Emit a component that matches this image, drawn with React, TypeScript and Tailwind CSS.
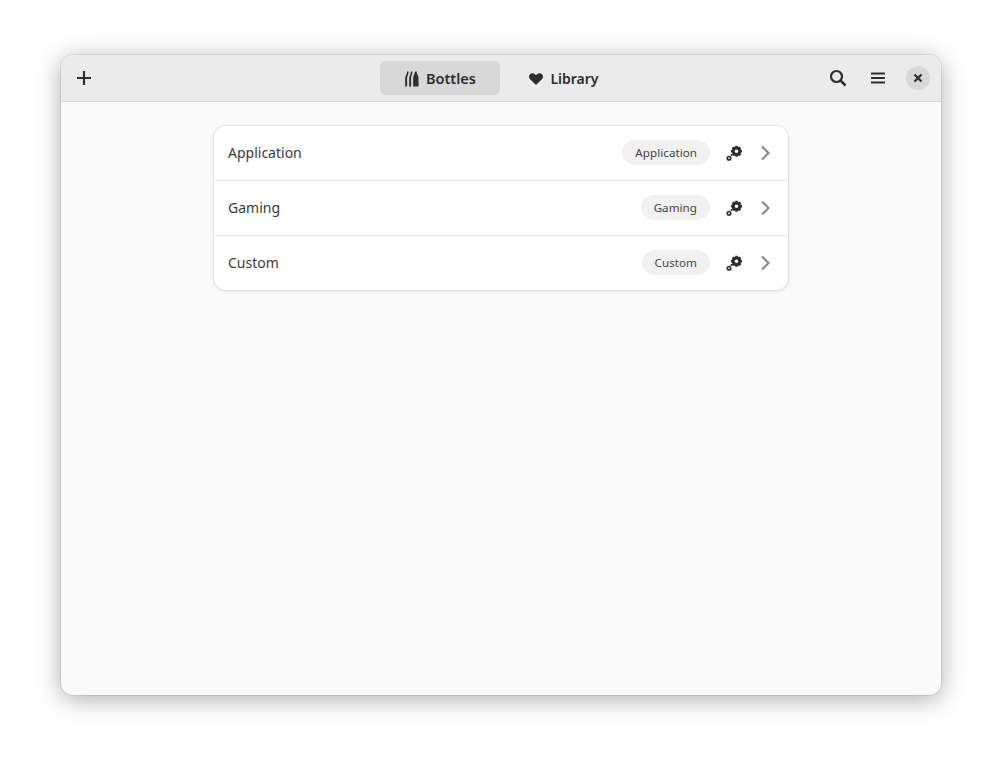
const rows = ["Application", "Gaming", "Custom"];

function BottlesIcon() {
  return (
    <svg width="16" height="16" viewBox="0 0 16 16" fill="#2e2e2e">
      <path d="M1.200 15.500V7.200C1.200 5 2.800 3.600 3.200.5h1.500C4.400 3.800 3.100 5.200 3.100 7.400v8.100z" />
      <path d="M5.200 15.500V7.200C5.200 5 6.600 3.600 7 .5h1.500C8.200 3.800 7.100 5.200 7.100 7.400v8.100z" />
      <path d="M9.200 15.500V6.600c0-1.800 1.500-2.800 1.800-6.100h1.600c.3 3.300 1.900 4.300 1.900 6.100v8.900z" />
    </svg>
  );
}

function GearsIcon() {
  return (
    <svg width="17" height="16" viewBox="0 0 17 16" fill="none" stroke="#2e2e2e">
      <circle cx="10.500" cy="6.300" r="3.300" strokeWidth="3" />
      <path
        d="M10.500.8v2.300M10.500 9.500v2.300M5 6.300h2.300M13.700 6.300H16M6.600 2.400l1.700 1.700M12.700 8.500l1.700 1.700M14.400 2.400l-1.700 1.700M8.300 8.500l-1.700 1.700"
        strokeWidth="2.400"
      />
      <circle cx="3" cy="13.200" r="1.700" strokeWidth="1.700" />
      <circle cx="5.600" cy="10" r="1.100" fill="#2e2e2e" stroke="none" />
    </svg>
  );
}

function Row({ name, last }: { name: string; last: boolean }) {
  return (
    <div
      className={`flex items-center pb-px pl-[14px] pr-[15px] ${
        last ? "h-[54px]" : "h-[55px] border-b border-[#e8e8e8]"
      }`}
    >
      <span className="flex-1 text-[14px] text-[#3a3a3a]">{name}</span>
      <span className="flex h-[25px] items-center rounded-full bg-[#f1f1f1] px-[13px] text-[11.600px] tracking-[0.05px] text-[#444444]">
        {name}
      </span>
      <span className="ml-[16px] flex w-[17px] justify-center">
        <GearsIcon />
      </span>
      <svg className="ml-[14px]" width="16" height="16" viewBox="0 0 16 16" fill="none">
        <path d="M5 1.500 11.500 8 5 14.500" stroke="#8a8a8a" strokeWidth="2.200" />
      </svg>
    </div>
  );
}

export default function App() {
  return (
    <div
      className="h-[762px] w-[1002px] overflow-hidden bg-white pl-[61px] pt-[55px]"
      style={{ fontFamily: '"Noto Sans", sans-serif' }}
    >
      <div className="flex h-[640px] w-[880px] flex-col overflow-hidden rounded-[12px] bg-[#fafafa] shadow-[0_4px_24px_rgba(0,0,0,0.33),0_0_0_1px_rgba(0,0,0,0.07)]">
        {/* Header bar */}
        <div className="relative flex h-[47px] shrink-0 items-center border-b border-[#d9d9d9] bg-[#ebebeb]">
          <svg className="ml-[15px]" width="16" height="16" viewBox="0 0 16 16" fill="none">
            <path d="M8 1v14M1 8h14" stroke="#2e2e2e" strokeWidth="2.200" />
          </svg>

          <div className="absolute left-[319px] top-[6px] flex items-center">
            <div className="flex h-[34px] w-[120px] items-center justify-center gap-[6px] rounded-[6px] bg-[#d8d8d8] pt-px text-[14.500px] font-semibold text-[#2e2e2e]">
              <BottlesIcon />
              Bottles
            </div>
            <div className="ml-[4px] flex h-[34px] w-[119px] items-center justify-center gap-[6px] pt-px text-[14px] font-semibold text-[#2e2e2e]">
              <svg width="16" height="16" viewBox="0 0 16 16" fill="#2e2e2e">
                <path d="M8 14 1.900 7.900C.4 6.200.9 3.200 3.400 2.500 5.200 2 6.800 2.800 8 4.400 9.200 2.800 10.800 2 12.600 2.500c2.500.7 3 3.700 1.500 5.400z" />
              </svg>
              Library
            </div>
          </div>

          <div className="ml-auto flex items-center pr-[11px]">
            <svg width="18" height="18" viewBox="0 0 18 18" fill="none" stroke="#2e2e2e">
              <circle cx="7.500" cy="7.500" r="5.500" strokeWidth="2.200" />
              <path d="m11.500 11.500 5 5" strokeWidth="2.500" />
            </svg>
            <svg className="ml-[23px]" width="16" height="16" viewBox="0 0 16 16" fill="#2e2e2e">
              <path d="M1 2.500h14v2H1zM1 7h14v2H1zM1 11.500h14v2H1z" />
            </svg>
            <div className="ml-[20px] flex h-[24px] w-[24px] items-center justify-center rounded-full bg-[#d8d8d8]">
              <svg width="10" height="10" viewBox="0 0 10 10" fill="none">
                <path d="m1.500 1.500 7 7M8.500 1.500l-7 7" stroke="#2e2e2e" strokeWidth="2.200" />
              </svg>
            </div>
          </div>
        </div>

        {/* Content */}
        <div className="flex flex-1 justify-center pt-[24px]">
          <div className="h-[164px] w-[574px] rounded-[12px] bg-white shadow-[0_0_0_1px_rgba(0,0,0,0.03),0_1px_4px_rgba(0,0,0,0.14)]">
            {rows.map((name, i) => (
              <Row key={name} name={name} last={i === rows.length - 1} />
            ))}
          </div>
        </div>
      </div>
    </div>
  );
}
